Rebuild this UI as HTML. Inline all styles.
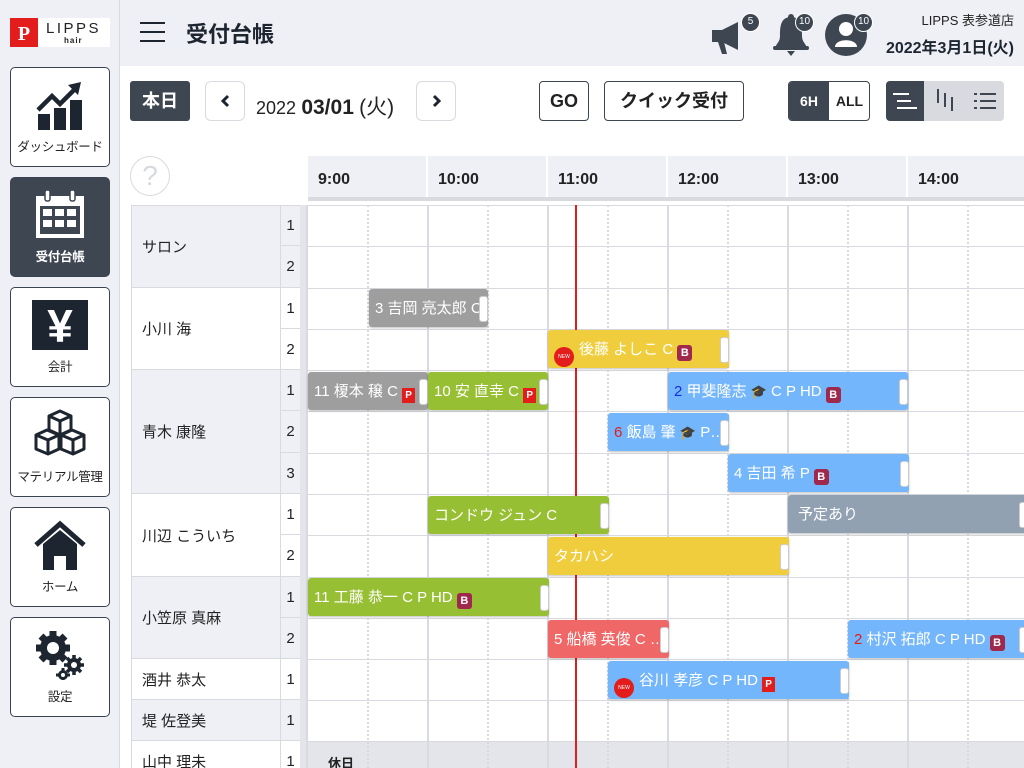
<!DOCTYPE html>
<html><head><meta charset="utf-8"><style>
*{box-sizing:border-box;margin:0;padding:0}
html,body{width:1024px;height:768px;overflow:hidden}
body{background:#fff;font-family:"Liberation Sans","Noto Sans CJK JP",sans-serif;color:#222;position:relative}
.abs{position:absolute}
#side{left:0;top:0;width:120px;height:768px;background:#eff0f5;border-right:1px solid #d8dae0}
#head{left:120px;top:0;width:904px;height:66px;background:#eff0f5}
.nav{position:absolute;left:10px;width:100px;height:100px;border:1px solid #3a4350;border-radius:5px;background:#fff;text-align:center;font-size:12.5px;color:#222}
.nav.act{background:#3d4651;color:#fff;font-weight:bold}
.nav svg{position:absolute;left:50%;transform:translateX(-50%)}
.nav span{position:absolute;left:0;right:0;bottom:11px;white-space:nowrap;letter-spacing:-0.3px}
.btn{position:absolute;border:1px solid #3d4651;border-radius:4px;background:#fff;font-weight:bold;font-size:18px;text-align:center;line-height:38px;color:#222}
.badge{position:absolute;width:19px;height:19px;border-radius:50%;background:#3d4651;border:1.5px solid #fff;color:#fff;font-size:10px;text-align:center;line-height:16px}
.th{position:absolute;top:156px;height:41px;width:118px;background:#eff0f5;font-weight:bold;font-size:16px;padding:15px 0 0 10px}
.name{position:absolute;left:131px;width:149px;font-size:15px;padding-left:10px;border-bottom:1px solid #d8dae0;border-left:1px solid #d8dae0}
.num{position:absolute;left:280px;width:20px;font-size:15px;text-align:center;border-left:1px solid #d8dae0;border-bottom:1px solid #d8dae0}
.hl{position:absolute;left:308px;width:716px;height:1px;background:#d8dae0}
.vl{position:absolute;top:205px;height:563px;width:2px;background:#d8dae0}
.dl{position:absolute;top:205px;height:563px;width:0;border-left:2px dotted #d8dae0}
.ev{position:absolute;height:38px;border-radius:3px;color:#fff;font-size:15px;line-height:40px;padding-left:6px;white-space:nowrap;overflow:hidden;box-shadow:0 1px 2px rgba(0,0,0,.25)}
.ev::after{content:"";position:absolute;right:0;top:7px;width:7px;height:24px;background:#fff;border-radius:3px;border:1px solid #ccc}
.g{background:#9e9e9e}.gr{background:#97bf33}.y{background:#f0cd3c}.b{background:#74b6fb}.r{background:#ef6767}.s{background:#92a1b1}
.B{display:inline-block;width:15px;height:16px;background:#a0284d;border-radius:3px;font-size:11px;line-height:16px;text-align:center;vertical-align:-2px;font-weight:bold}
.P{display:inline-block;width:13px;height:15px;background:#e31c1c;font-size:10px;line-height:15px;text-align:center;vertical-align:-2px;font-weight:bold}
.new{display:inline-block;width:20px;height:20px;border-radius:50%;background:#e31c1c;font-size:5px;line-height:20px;text-align:center;vertical-align:-4px;margin-right:5px}
.cap{font-size:13px;color:#1d2530}
</style></head><body>
<div id="side" class="abs">
 <div class="abs" style="left:10px;top:18px;width:100px;height:29px;background:#fff">
  <div class="abs" style="left:0;top:0;width:28px;height:29px;background:#e31c1c;color:#fff;font-weight:bold;font-size:20px;text-align:center;line-height:32px;font-family:'Liberation Serif',serif">P</div>
  <div class="abs" style="left:36px;top:2px;font-size:15px;letter-spacing:2.5px;color:#222">LIPPS</div>
  <div class="abs" style="left:54px;top:18px;font-size:8px;font-weight:bold;letter-spacing:1px">hair</div>
 </div>
 <div class="nav" style="top:67px"><svg width="50" height="50" viewBox="0 0 50 50" style="top:12px"><path d="M3 30 L17 16 L25 24 L40 9" stroke="#1d2530" stroke-width="4.5" fill="none"/><path d="M33 5 L46 2 L43 15Z" fill="#1d2530"/><rect x="3" y="34" width="12" height="16" fill="#1d2530"/><rect x="19" y="28" width="12" height="22" fill="#1d2530"/><rect x="35" y="20" width="12" height="30" fill="#1d2530"/></svg><span>ダッシュボード</span></div>
 <div class="nav act" style="top:177px"><svg width="54" height="50" viewBox="0 0 54 50" style="top:12px"><rect x="3" y="6" width="48" height="42" fill="#fff"/><rect x="7" y="16" width="40" height="28" fill="#3d4651"/><g fill="#fff"><rect x="10" y="19" width="9" height="7"/><rect x="22" y="19" width="9" height="7"/><rect x="34" y="19" width="9" height="7"/><rect x="10" y="30" width="9" height="7"/><rect x="22" y="30" width="9" height="7"/><rect x="34" y="30" width="9" height="7"/></g><rect x="12" y="0" width="5" height="11" rx="2" fill="#fff" stroke="#3d4651" stroke-width="1.5"/><rect x="37" y="0" width="5" height="11" rx="2" fill="#fff" stroke="#3d4651" stroke-width="1.5"/></svg><span>受付台帳</span></div>
 <div class="nav" style="top:287px"><svg width="56" height="50" viewBox="0 0 56 50" style="top:12px"><rect x="0" y="0" width="56" height="50" fill="#1d2530"/><text x="28" y="42" font-size="46" font-weight="bold" fill="#fff" text-anchor="middle" font-family="Liberation Sans">¥</text></svg><span>会計</span></div>
 <div class="nav" style="top:397px"><svg width="54" height="50" viewBox="0 0 54 50" style="top:10px"><g fill="#fff" stroke="#1d2530" stroke-width="3" stroke-linejoin="round"><path d="M16 8 L27 3 L38 8 L38 22 L27 27 L16 22Z"/><path d="M3 27 L14 22 L26 27 L26 41 L15 46 L3 41Z"/><path d="M28 27 L39 22 L51 27 L51 41 L40 46 L28 41Z"/><path d="M16 8 L27 13 L38 8 M27 13 V27 M3 27 L15 32 L26 27 M15 32 V46 M28 27 L40 32 L51 27 M40 32 V46" fill="none"/></g></svg><span>マテリアル管理</span></div>
 <div class="nav" style="top:507px"><svg width="54" height="50" viewBox="0 0 54 50" style="top:12px"><path d="M3 25 L27 4 L51 25" stroke="#1d2530" stroke-width="5" fill="none"/><path d="M10 24 L27 10 L44 24 L44 50 L33 50 L33 36 L21 36 L21 50 L10 50Z" fill="#1d2530"/></svg><span>ホーム</span></div>
 <div class="nav" style="top:617px"><svg width="54" height="50" viewBox="0 0 54 50" style="top:12px"><g fill="#1d2530"><circle cx="20" cy="18" r="13"/><g stroke="#1d2530" stroke-width="7"><path d="M20 1 V35 M3 18 H37 M8 6 L32 30 M32 6 L8 30"/></g><circle cx="41" cy="35" r="7"/><g stroke="#1d2530" stroke-width="3.5"><path d="M41 25 V45 M31 35 H51 M34 28 L48 42 M48 28 L34 42"/></g><circle cx="30" cy="45" r="5"/><g stroke="#1d2530" stroke-width="3"><path d="M30 38 V52 M23 45 H37"/></g></g><circle cx="20" cy="18" r="6" fill="#fff"/><circle cx="41" cy="35" r="3" fill="#fff"/><circle cx="30" cy="45" r="2" fill="#fff"/></svg><span>設定</span></div>
</div>

<div id="head" class="abs">
 <div class="abs" style="left:20px;top:22px;width:25px;height:2px;background:#1d2530"></div>
 <div class="abs" style="left:20px;top:31px;width:25px;height:2px;background:#1d2530"></div>
 <div class="abs" style="left:20px;top:40px;width:25px;height:2px;background:#1d2530"></div>
 <div class="abs" style="left:66px;top:17px;font-size:22px;font-weight:bold;color:#1d2530">受付台帳</div>
 <svg class="abs" style="left:590px;top:16px" width="40" height="40" viewBox="0 0 40 40"><path d="M2 14 H12 L28 6 V34 L12 26 H2Z" fill="#3d4651"/><path d="M8 26 L12 38 H17 L14 26Z" fill="#3d4651"/></svg>
 <div class="badge" style="left:621px;top:13px">5</div>
 <svg class="abs" style="left:652px;top:14px" width="38" height="42" viewBox="0 0 38 42"><circle cx="19" cy="3" r="3" fill="#3d4651"/><path d="M19 3 C8 3 8 14 8 22 C8 28 4 30 4 32 H34 C34 30 30 28 30 22 C30 14 30 3 19 3Z" fill="#3d4651"/><rect x="1" y="32" width="36" height="4" rx="2" fill="#3d4651"/><path d="M15 37 H23 L19 42Z" fill="#3d4651"/></svg>
 <div class="badge" style="left:675px;top:13px">10</div>
 <svg class="abs" style="left:705px;top:14px" width="42" height="42" viewBox="0 0 42 42"><circle cx="21" cy="21" r="21" fill="#3d4651"/><circle cx="21" cy="15" r="7" fill="#fff"/><path d="M10 33 C10 24 32 24 32 33Z" fill="#fff"/></svg>
 <div class="badge" style="left:734px;top:13px">10</div>
 <div class="abs" style="right:10px;top:10px;font-size:13px;color:#222">LIPPS 表参道店</div>
 <div class="abs" style="right:10px;top:34px;font-size:16px;font-weight:bold;color:#1d2530">2022年3月1日(火)</div>
</div>

<div class="abs" style="left:130px;top:81px;width:60px;height:40px;background:#3d4651;border-radius:3px;color:#fff;font-weight:bold;font-size:18px;text-align:center;line-height:40px">本日</div>
<div class="abs" style="left:205px;top:81px;width:40px;height:40px;border:1.5px solid #d8dae0;border-radius:6px"><svg class="abs" style="left:13px;top:12px" width="12" height="14" viewBox="0 0 12 14"><path d="M9 2 L4 7 L9 12" stroke="#1d2530" stroke-width="3" fill="none"/></svg></div>
<div class="abs" style="left:256px;top:91px;font-size:19px;"><span style="font-size:18px">2022</span> <b style="font-size:21px">03/01</b> <span style="font-size:21px">(火)</span></div>
<div class="abs" style="left:416px;top:81px;width:40px;height:40px;border:1.5px solid #d8dae0;border-radius:6px"><svg class="abs" style="left:14px;top:12px" width="12" height="14" viewBox="0 0 12 14"><path d="M3 2 L8 7 L3 12" stroke="#1d2530" stroke-width="3" fill="none"/></svg></div>
<div class="btn" style="left:539px;top:81px;width:50px;height:40px">GO</div>
<div class="btn" style="left:604px;top:81px;width:140px;height:40px">クイック受付</div>
<div class="abs" style="left:788px;top:81px;width:82px;height:40px;border:1px solid #3d4651;border-radius:4px;overflow:hidden;font-weight:bold;font-size:14px;line-height:38px">
 <div class="abs" style="left:0;top:0;width:40px;height:40px;background:#3d4651;color:#fff;text-align:center">6H</div>
 <div class="abs" style="left:40px;top:0;width:41px;text-align:center">ALL</div>
</div>
<div class="abs" style="left:886px;top:81px;width:118px;height:40px;background:#d8dae0;border-radius:4px;overflow:hidden">
 <div class="abs" style="left:0;top:0;width:38px;height:40px;background:#3d4651"></div>
 <div class="abs" style="left:7px;top:12px;width:16px;height:2px;background:#fff"></div>
 <div class="abs" style="left:11px;top:19px;width:14px;height:2px;background:#fff"></div>
 <div class="abs" style="left:11px;top:26px;width:20px;height:2px;background:#fff"></div>
 <div class="abs" style="left:51px;top:8px;width:2px;height:14px;background:#3d4651"></div>
 <div class="abs" style="left:58px;top:12px;width:2px;height:14px;background:#3d4651"></div>
 <div class="abs" style="left:65px;top:16px;width:2px;height:14px;background:#3d4651"></div>
 <div class="abs" style="left:88px;top:12px;width:3px;height:2px;background:#3d4651"></div><div class="abs" style="left:94px;top:12px;width:16px;height:2px;background:#3d4651"></div>
 <div class="abs" style="left:88px;top:19px;width:3px;height:2px;background:#3d4651"></div><div class="abs" style="left:94px;top:19px;width:16px;height:2px;background:#3d4651"></div>
 <div class="abs" style="left:88px;top:26px;width:3px;height:2px;background:#3d4651"></div><div class="abs" style="left:94px;top:26px;width:16px;height:2px;background:#3d4651"></div>
</div>

<div class="abs" style="left:130px;top:156px;width:40px;height:40px;border:1.5px solid #d8dae0;border-radius:50%;color:#d8dae0;font-size:28px;text-align:center;line-height:38px">?</div>

<div class="th" style="left:308px">9:00</div>
<div class="th" style="left:428px">10:00</div>
<div class="th" style="left:548px">11:00</div>
<div class="th" style="left:668px">12:00</div>
<div class="th" style="left:788px">13:00</div>
<div class="th" style="left:908px;width:116px">14:00</div>
<div class="abs" style="left:308px;top:197px;width:716px;height:4px;background:#d8dae0"></div>

<div class="abs" style="left:300px;top:205px;width:6px;height:563px;background:#e4e5ea"></div>

<div class="name" style="top:205px;height:83px;line-height:84px;background:#eff0f5;border-top:1px solid #d8dae0">サロン</div>
<div class="name" style="top:288px;height:82px;line-height:84px;background:#fff">小川 海</div>
<div class="name" style="top:370px;height:124px;line-height:126px;background:#eff0f5">青木 康隆</div>
<div class="name" style="top:494px;height:83px;line-height:85px;background:#fff">川辺 こういち</div>
<div class="name" style="top:577px;height:82px;line-height:84px;background:#eff0f5">小笠原 真麻</div>
<div class="name" style="top:659px;height:41px;line-height:43px;background:#fff">酒井 恭太</div>
<div class="name" style="top:700px;height:41px;line-height:43px;background:#eff0f5">堤 佐登美</div>
<div class="name" style="top:741px;height:27px;line-height:43px;background:#fff;border-bottom:none">山中 理未</div>

<div class="num" style="top:205px;height:41px;line-height:40px;background:#eff0f5;border-top:1px solid #d8dae0">1</div>
<div class="num" style="top:246px;height:42px;line-height:42px;background:#eff0f5">2</div>
<div class="num" style="top:288px;height:41px;line-height:41px">1</div>
<div class="num" style="top:329px;height:41px;line-height:41px">2</div>
<div class="num" style="top:370px;height:41px;line-height:41px;background:#eff0f5">1</div>
<div class="num" style="top:411px;height:42px;line-height:42px;background:#eff0f5">2</div>
<div class="num" style="top:453px;height:41px;line-height:41px;background:#eff0f5">3</div>
<div class="num" style="top:494px;height:41px;line-height:41px">1</div>
<div class="num" style="top:535px;height:42px;line-height:42px">2</div>
<div class="num" style="top:577px;height:41px;line-height:41px;background:#eff0f5">1</div>
<div class="num" style="top:618px;height:41px;line-height:41px;background:#eff0f5">2</div>
<div class="num" style="top:659px;height:41px;line-height:41px">1</div>
<div class="num" style="top:700px;height:41px;line-height:41px;background:#eff0f5">1</div>
<div class="num" style="top:741px;height:27px;line-height:41px;border-bottom:none">1</div>

<div class="abs" style="left:308px;top:741px;width:716px;height:27px;background:#e4e5ea"></div>
<div class="abs" style="left:328px;top:753px;font-size:13px;font-weight:bold">休日</div>

<div class="hl" style="top:205px"></div><div class="hl" style="top:246px"></div><div class="hl" style="top:288px"></div><div class="hl" style="top:329px"></div><div class="hl" style="top:370px"></div><div class="hl" style="top:411px"></div><div class="hl" style="top:453px"></div><div class="hl" style="top:494px"></div><div class="hl" style="top:535px"></div><div class="hl" style="top:577px"></div><div class="hl" style="top:618px"></div><div class="hl" style="top:659px"></div><div class="hl" style="top:700px"></div><div class="hl" style="top:741px"></div>
<div class="vl" style="left:306px"></div><div class="vl" style="left:427px"></div><div class="vl" style="left:547px"></div><div class="vl" style="left:667px"></div><div class="vl" style="left:787px"></div><div class="vl" style="left:907px"></div>
<div class="dl" style="left:367px"></div><div class="dl" style="left:487px"></div><div class="dl" style="left:607px"></div><div class="dl" style="left:727px"></div><div class="dl" style="left:847px"></div><div class="dl" style="left:967px"></div>

<div class="abs" style="left:575px;top:205px;width:2px;height:563px;background:#e31c1c"></div>

<div class="ev g" style="left:369px;top:289px;width:119px">3 吉岡 亮太郎 C</div>
<div class="ev y" style="left:548px;top:330px;width:181px"><span class="new">NEW</span>後藤 よしこ C <span class="B">B</span></div>
<div class="ev g" style="left:308px;top:372px;width:120px">11 榎本 穣 C <span class="P">P</span></div>
<div class="ev gr" style="left:428px;top:372px;width:120px">10 安 直幸 C <span class="P">P</span></div>
<div class="ev b" style="left:668px;top:372px;width:240px"><span style="color:#1530d8">2</span> 甲斐隆志 <span class="cap">🎓</span> C P HD <span class="B">B</span></div>
<div class="ev b" style="left:608px;top:413px;width:121px"><span style="color:#e31c1c">6</span> 飯島 肇 <span class="cap">🎓</span> P…</div>
<div class="ev b" style="left:728px;top:454px;width:181px">4 吉田 希 P <span class="B">B</span></div>
<div class="ev gr" style="left:428px;top:496px;width:181px">コンドウ ジュン C</div>
<div class="ev s" style="left:788px;top:495px;width:240px;padding-left:10px">予定あり</div>
<div class="ev y" style="left:548px;top:537px;width:241px">タカハシ</div>
<div class="ev gr" style="left:308px;top:578px;width:241px">11 工藤 恭一 C P HD <span class="B">B</span></div>
<div class="ev r" style="left:548px;top:620px;width:121px">5 船橋 英俊 C …</div>
<div class="ev b" style="left:848px;top:620px;width:180px"><span style="color:#e31c1c">2</span> 村沢 拓郎 C P HD <span class="B">B</span></div>
<div class="ev b" style="left:608px;top:661px;width:241px"><span class="new">NEW</span>谷川 孝彦 C P HD <span class="P">P</span></div>
</body></html>
